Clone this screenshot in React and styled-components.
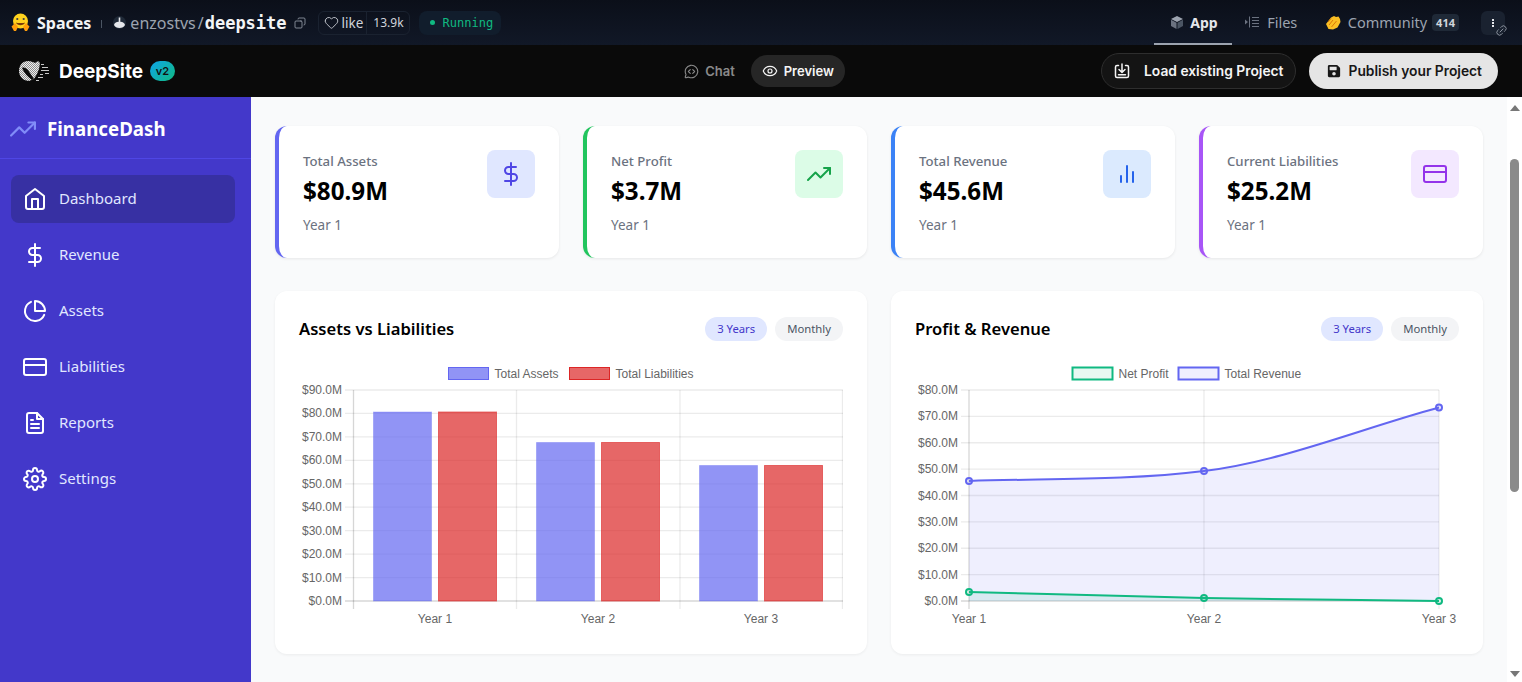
import { Copy, Eye, Heart, Link2, MessageCircleCode } from "lucide-react";
import { FaSave } from "react-icons/fa";
import {
  FiBarChart2,
  FiCreditCard,
  FiDollarSign,
  FiFileText,
  FiHome,
  FiPieChart,
  FiSettings,
  FiTrendingUp,
} from "react-icons/fi";
import styled, { createGlobalStyle } from "styled-components";

const GlobalStyle = createGlobalStyle`
  html, body { margin: 0; padding: 0; height: 100%; overflow: hidden; }
  body { font-family: "Noto Sans", sans-serif; background: #f9fafb; }
  * { box-sizing: border-box; }
`;

const stats = [
  { label: "Total Assets", value: "$80.9M", accent: "#6366f1", tint: "#e0e7ff", ink: "#4f46e5", Icon: FiDollarSign },
  { label: "Net Profit", value: "$3.7M", accent: "#22c55e", tint: "#dcfce7", ink: "#16a34a", Icon: FiTrendingUp },
  { label: "Total Revenue", value: "$45.6M", accent: "#3b82f6", tint: "#dbeafe", ink: "#2563eb", Icon: FiBarChart2 },
  { label: "Current Liabilities", value: "$25.2M", accent: "#a855f7", tint: "#f3e8ff", ink: "#9333ea", Icon: FiCreditCard },
];

const navItems = [
  { label: "Dashboard", Icon: FiHome, active: true },
  { label: "Revenue", Icon: FiDollarSign },
  { label: "Assets", Icon: FiPieChart },
  { label: "Liabilities", Icon: FiCreditCard },
  { label: "Reports", Icon: FiFileText },
  { label: "Settings", Icon: FiSettings },
];

// chart coordinates are relative to the canvas, like a chart.js canvas
const CHART_W = 544;
const CHART_H = 269;
const PLOT_TOP = 29;
const PLOT_BOTTOM = 240;
const GRID = "rgba(0,0,0,.08)";
const AXIS = "rgba(0,0,0,.16)";

const Legend = ({ items }) =>
  items.map((item) => (
    <g key={item.label}>
      <rect x={item.x} y={6.5} width={40} height={12} fill={item.fill} stroke={item.stroke} strokeWidth={item.line} />
      <text x={item.x + 46} y={16.5} fontSize="12" fill="#666">
        {item.label}
      </text>
    </g>
  ));

const YAxis = ({ max, left, right }) => {
  const rows = [];
  for (let v = 0; v <= max; v += 10) {
    const y = PLOT_BOTTOM - (v / max) * (PLOT_BOTTOM - PLOT_TOP);
    rows.push(
      <g key={v}>
        <line x1={left - 8} x2={right} y1={y} y2={y} stroke={v === 0 ? AXIS : GRID} strokeWidth="1.3" />
        <text x={left - 11} y={y + 4} fontSize="12" fill="#666" textAnchor="end">
          ${v}.0M
        </text>
      </g>
    );
  }
  return rows;
};

const barGroups = [
  { label: "Year 1", x: 74, top: 51 },
  { label: "Year 2", x: 237, top: 81.5 },
  { label: "Year 3", x: 400, top: 104.5 },
];

const BarChart = () => (
  <ChartCanvas viewBox={`0 0 ${CHART_W} ${CHART_H}`}>
    <Legend
      items={[
        { label: "Total Assets", x: 149.5, fill: "rgba(99,102,241,.7)", stroke: "#6366f1", line: 1 },
        { label: "Total Liabilities", x: 270.5, fill: "rgba(220,38,38,.7)", stroke: "#dc2626", line: 1 },
      ]}
    />
    <YAxis max={90} left={54} right={544} />
    {[54.5, 217.5, 381, 543.5].map((x) => (
      <line key={x} x1={x} x2={x} y1={PLOT_TOP} y2={PLOT_BOTTOM + 8} stroke={x === 54.5 ? AXIS : GRID} strokeWidth="1.3" />
    ))}
    {barGroups.map((g) => (
      <g key={g.label}>
        <rect x={g.x + 0.5} y={g.top} width={58} height={PLOT_BOTTOM - g.top} fill="rgba(99,102,241,.7)" stroke="rgba(99,102,241,.35)" />
        <rect x={g.x + 65.5} y={g.top} width={58} height={PLOT_BOTTOM - g.top} fill="rgba(220,38,38,.7)" stroke="rgba(220,38,38,.6)" />
        <text x={g.x + 62} y={262} fontSize="12" fill="#666" textAnchor="middle">
          {g.label}
        </text>
      </g>
    ))}
  </ChartCanvas>
);

// monotone cubic through three points, as chart.js does it
const curve = ([a, b, c]) => {
  const dx = (b[0] - a[0]) / 3;
  const d0 = (b[1] - a[1]) / (b[0] - a[0]);
  const d1 = (c[1] - b[1]) / (c[0] - b[0]);
  let m0 = d0;
  let m1 = (d0 + d1) / 2;
  if (d0 !== 0) {
    const s = Math.hypot(m0 / d0, m1 / d0);
    if (s > 3) {
      m0 *= 3 / s;
      m1 *= 3 / s;
    }
  }
  return (
    `M${a} C${a[0] + dx} ${a[1] + m0 * dx} ${b[0] - dx} ${b[1] - m1 * dx} ${b} ` +
    `C${b[0] + dx} ${b[1] + m1 * dx} ${c[0] - dx} ${c[1] - d1 * dx} ${c}`
  );
};

const revenue = [[54, 120], [289, 110], [524, 46.5]];
const profit = [[54, 231], [289, 237], [524, 240]];

const Series = ({ points, color, fill }) => (
  <g>
    <path d={`${curve(points)} L524 240 L54 240 Z`} fill={fill} />
    <path d={curve(points)} fill="none" stroke={color} strokeWidth="2" />
    {points.map(([x, y]) => (
      <circle key={x} cx={x} cy={y} r="3" fill={fill} stroke={color} strokeWidth="2" />
    ))}
  </g>
);

const LineChart = () => (
  <ChartCanvas viewBox={`0 0 ${CHART_W} ${CHART_H}`}>
    <Legend
      items={[
        { label: "Net Profit", x: 157.5, fill: "rgba(16,185,129,.1)", stroke: "#10b981", line: 2 },
        { label: "Total Revenue", x: 263.5, fill: "rgba(99,102,241,.1)", stroke: "#6366f1", line: 2 },
      ]}
    />
    <YAxis max={80} left={54} right={524} />
    {[54, 289, 524].map((x, i) => (
      <g key={x}>
        <line x1={x} x2={x} y1={PLOT_TOP} y2={PLOT_BOTTOM + 8} stroke={i === 0 ? AXIS : GRID} strokeWidth="1.3" />
        <text x={x} y={262} fontSize="12" fill="#666" textAnchor="middle">
          Year {i + 1}
        </text>
      </g>
    ))}
    <Series points={revenue} color="#6366f1" fill="rgba(99,102,241,.1)" />
    <Series points={profit} color="#10b981" fill="rgba(16,185,129,.1)" />
  </ChartCanvas>
);

const HugEmoji = () => (
  <svg width="19" height="19" viewBox="0 0 19 19">
    <circle cx="9.5" cy="8" r="7.5" fill="#ffd21e" />
    <path d="M5 9.5c1 3.5 8 3.500 9 0-1 .8-8 .8-9 0z" fill="#7a3b0a" />
    <circle cx="6.3" cy="6" r="1.1" fill="#3a3b45" />
    <circle cx="12.7" cy="6" r="1.1" fill="#3a3b45" />
    <path d="M.5 13.5 4 10l3 4-2 4H3zM18.500 13.500 15 10l-3 4 2 4h2z" fill="#ff9d0b" />
  </svg>
);

const OwnerAvatar = () => (
  <svg width="13" height="13" viewBox="0 0 13 13">
    <circle cx="6.5" cy="6.5" r="6.5" fill="#1f2937" />
    <path d="M5.700 1.500h1.600v4.200c2.600.2 4.500 1.300 4.700 3.300-.8 2-3 3-5.500 3S1.800 11 1 9c.2-2 2.100-3.100 4.700-3.300z" fill="#e5e7eb" />
  </svg>
);

const ClapEmoji = () => (
  <svg width="16" height="15" viewBox="0 0 16 15">
    <path d="M1 9 6 2.500 9 1l2 1 2.500-.5L15 4l.5 3-3 5.500L8 14.500 3.500 14z" fill="#fbbf24" />
    <path d="M4 10l4-5M6.500 12l5-6M3 7l3-3.500" stroke="#d97706" strokeWidth="1" fill="none" />
  </svg>
);

const Cube = () => (
  <svg width="12" height="13" viewBox="0 0 12 13">
    <path d="M6 0 12 3 6 6 0 3z" fill="#9ca3af" />
    <path d="M0 3.800 5.500 6.700V13L0 10z" fill="#6b7280" />
    <path d="M12 3.800 6.500 6.700V13L12 10z" fill="#4b5563" />
  </svg>
);

const FilesGlyph = () => (
  <svg width="15" height="12" viewBox="0 0 15 12" fill="#6b7280">
    <path d="M0 3.500 3 6 0 8.500z" />
    <rect x="4" y="0.500" width="1" height="11" />
    <rect x="7" y="1" width="7" height="1" />
    <rect x="7" y="4" width="7" height="1" />
    <rect x="7" y="7" width="7" height="1" />
    <rect x="7" y="10" width="7" height="1" />
  </svg>
);

const DeepLogo = () => (
  <svg width="33" height="24" viewBox="0 0 33 24">
    <defs>
      <pattern id="checker" width="2" height="2" patternUnits="userSpaceOnUse">
        <rect width="2" height="2" fill="#8f8f8f" />
        <rect width="1" height="1" fill="#eee" />
        <rect x="1" y="1" width="1" height="1" fill="#eee" />
      </pattern>
    </defs>
    <path d="M1 12C1 6 5 2 10 2c3 0 5 1 7 2l3-2 2 2-1 6-2 5-3 5-5 2C6 22 1 18 1 12z" fill="url(#checker)" />
    <path d="M4 9c2-1 4 0 6 2l6 9-2 1C10 18 6 14 4 9z" fill="#0a0a0a" />
    <path d="M23 5h3v1h-3zM24 8h6v1h-6zM23 11h8v1h-8zM27 14h4v1h-4zM22 15h3v1h-3zM20 18h5v1h-5zM18 21h3v1h-3z" fill="#c8c8c8" />
  </svg>
);

const TrayDownload = () => (
  <svg width="16" height="16" viewBox="0 0 16 16" fill="none" stroke="currentColor" strokeWidth="1.500" strokeLinecap="round" strokeLinejoin="round">
    <path d="M4.500 2.500H3A1.500 1.500 0 0 0 1.500 4v9A1.500 1.500 0 0 0 3 14.500h10a1.500 1.500 0 0 0 1.500-1.500V4A1.500 1.500 0 0 0 13 2.500h-1.500" />
    <path d="M8 1v8M5 6.500 8 9.500l3-3M4.500 11.700h7" />
  </svg>
);

const App = () => (
  <Page>
    <GlobalStyle />
    <HubBar>
      <HubLeft>
        <HugEmoji />
        <HubBrand>Spaces</HubBrand>
        <HubDivider />
        <OwnerAvatar />
        <Owner>enzostvs</Owner>
        <Slash>/</Slash>
        <RepoName>deepsite</RepoName>
        <CopyIcon size={12} strokeWidth={1.6} />
        <LikeGroup>
          <LikeButton>
            <Heart size={15} strokeWidth={1.4} /> like
          </LikeButton>
          <LikeCount>13.9k</LikeCount>
        </LikeGroup>
        <StatusPill>
          <StatusDot />
          Running
        </StatusPill>
      </HubLeft>
      <HubRight>
        <HubTab $active>
          <Cube />
          App
        </HubTab>
        <HubTab>
          <FilesGlyph />
          Files
        </HubTab>
        <HubTab>
          <ClapEmoji />
          Community
          <CountBadge>414</CountBadge>
        </HubTab>
        <MenuButton>
          <MenuDots />
          <MenuLink size={13} strokeWidth={1.5} />
        </MenuButton>
      </HubRight>
    </HubBar>
    <SiteBar>
      <SiteBrand>
        <DeepLogo />
        <SiteName>DeepSite</SiteName>
        <VersionBadge>v2</VersionBadge>
      </SiteBrand>
      <ViewSwitch>
        <ViewOption>
          <MessageCircleCode size={15} strokeWidth={1.8} />
          Chat
        </ViewOption>
        <ViewOption $active>
          <Eye size={16} strokeWidth={1.8} />
          Preview
        </ViewOption>
      </ViewSwitch>
      <SiteActions>
        <GhostButton>
          <TrayDownload />
          Load existing Project
        </GhostButton>
        <SolidButton>
          <FaSave size={14} />
          Publish your Project
        </SolidButton>
      </SiteActions>
    </SiteBar>
    <Body>
      <Sidebar>
        <SideHeader>
          <FiTrendingUp size={26} color="#818cf8" />
          <SideTitle>FinanceDash</SideTitle>
        </SideHeader>
        <SideNav>
          {navItems.map(({ label, Icon, active }) => (
            <NavItem key={label} $active={active}>
              <Icon size={24} />
              <NavLabel>{label}</NavLabel>
            </NavItem>
          ))}
        </SideNav>
      </Sidebar>
      <Main>
        <StatGrid>
          {stats.map(({ label, value, accent, tint, ink, Icon }) => (
            <StatCard key={label} $accent={accent}>
              <StatText>
                <StatLabel>{label}</StatLabel>
                <StatValue>{value}</StatValue>
                <StatNote>Year 1</StatNote>
              </StatText>
              <StatIcon $tint={tint} $ink={ink}>
                <Icon size={24} />
              </StatIcon>
            </StatCard>
          ))}
        </StatGrid>
        <ChartGrid>
          <ChartCard>
            <ChartHead>
              <ChartTitle>Assets vs Liabilities</ChartTitle>
              <PillRow>
                <RangePill $active>3 Years</RangePill>
                <RangePill>Monthly</RangePill>
              </PillRow>
            </ChartHead>
            <BarChart />
          </ChartCard>
          <ChartCard>
            <ChartHead>
              <ChartTitle>Profit &amp; Revenue</ChartTitle>
              <PillRow>
                <RangePill $active>3 Years</RangePill>
                <RangePill>Monthly</RangePill>
              </PillRow>
            </ChartHead>
            <LineChart />
          </ChartCard>
        </ChartGrid>
      </Main>
      <ScrollTrack>
        <ArrowUp />
        <ScrollThumb />
        <ArrowDown />
      </ScrollTrack>
    </Body>
  </Page>
);

export default App;

const Page = styled.div`
  width: 1522px;
  height: 682px;
  display: flex;
  flex-direction: column;
  overflow: hidden;
`;

const HubBar = styled.header`
  height: 45px;
  flex: none;
  display: flex;
  align-items: center;
  justify-content: space-between;
  padding: 0 17px 0 11px;
  background: linear-gradient(#0b0f19, #111827);
  color: #e5e7eb;
`;

const HubLeft = styled.div`
  display: flex;
  align-items: center;
`;

const HubBrand = styled.span`
  margin-left: 7px;
  font-size: 16px;
  font-weight: 700;
  color: #f3f4f6;
`;

const HubDivider = styled.span`
  width: 1px;
  height: 8px;
  margin: 2px 11px 0 10px;
  background: #4b5563;
`;

const Owner = styled.span`
  margin-left: 4px;
  font-size: 16px;
  color: #9ca3af;
`;

const Slash = styled.span`
  margin: 0 1px 0 2px;
  font-size: 16px;
  color: #9ca3af;
`;

const RepoName = styled.span`
  font-family: "DejaVu Sans Mono", monospace;
  font-size: 17px;
  font-weight: 700;
  color: #f3f4f6;
`;

const CopyIcon = styled(Copy)`
  margin-left: 7px;
  color: #9ca3af;
  transform: scaleX(-1);
`;

const LikeGroup = styled.div`
  display: flex;
  height: 24px;
  margin-left: 12px;
  align-items: stretch;
  border-radius: 6px;
  border: 1px solid #1a2230;
  color: #d1d5db;
`;

const LikeButton = styled.span`
  display: flex;
  align-items: center;
  gap: 3px;
  padding: 0 3px 0 5px;
  font-size: 13.500px;
  border-right: 1px solid #1a2230;
`;

const LikeCount = styled.span`
  display: flex;
  align-items: center;
  padding: 0 5px 0 6px;
  font-size: 12px;
`;

const StatusPill = styled.div`
  display: flex;
  align-items: center;
  gap: 8px;
  height: 24px;
  margin-left: 9px;
  padding: 0 8px 0 11px;
  border-radius: 8px;
  background: #111d2c;
  font-family: "DejaVu Sans Mono", monospace;
  font-size: 12px;
  color: #10b981;
`;

const StatusDot = styled.span`
  width: 5px;
  height: 5px;
  border-radius: 50%;
  background: #10b981;
`;

const HubRight = styled.nav`
  display: flex;
  align-items: center;
  height: 100%;
`;

const HubTab = styled.span`
  display: flex;
  align-items: center;
  gap: 7px;
  height: 100%;
  padding: ${(p) => (p.$active ? "1px 14px 0 17px" : "1px 14px 0 13.500px")};
  font-size: ${(p) => (p.$active ? "14px" : "14.500px")};
  font-weight: ${(p) => (p.$active ? 700 : 400)};
  color: ${(p) => (p.$active ? "#e5e7eb" : "#9ca3af")};
  border-bottom: 2px solid ${(p) => (p.$active ? "#9ca3af" : "transparent")};
`;

const CountBadge = styled.span`
  margin-left: -2px;
  padding: 1px 4px;
  border-radius: 4px;
  background: #1f2937;
  font-size: 11px;
  font-weight: 700;
  color: #d1d5db;
`;

const MenuButton = styled.span`
  position: relative;
  display: flex;
  align-items: center;
  justify-content: center;
  width: 24px;
  height: 24px;
  margin-left: 8px;
  border-radius: 6px;
  background: #1a2230;
`;

const MenuDots = styled.span`
  width: 2px;
  height: 2px;
  background: #e5e7eb;
  box-shadow: 0 -3px 0 #e5e7eb, 0 3px 0 #e5e7eb;
`;

const MenuLink = styled(Link2)`
  position: absolute;
  right: -3px;
  bottom: -2px;
  color: #9ca3af;
  transform: rotate(-45deg);
`;

const SiteBar = styled.div`
  height: 52px;
  flex: none;
  display: grid;
  grid-template-columns: 1fr auto 1fr;
  align-items: center;
  padding: 0 24px 0 18px;
  background: #0a0a0a;
`;

const SiteBrand = styled.div`
  display: flex;
  align-items: center;
`;

const SiteName = styled.span`
  margin-left: 8px;
  font-family: Inter, sans-serif;
  font-size: 19px;
  font-weight: 700;
  color: #fff;
`;

const VersionBadge = styled.span`
  display: flex;
  align-items: center;
  justify-content: center;
  width: 25px;
  height: 20px;
  margin-left: 7px;
  border-radius: 10px;
  background: linear-gradient(135deg, #0ea5e9, #10b981);
  font-family: Inter, sans-serif;
  font-size: 11px;
  font-weight: 600;
  color: #111;
`;

const ViewSwitch = styled.div`
  display: flex;
  align-items: center;
  gap: 5px;
  margin-left: 2px;
`;

const ViewOption = styled.span`
  display: flex;
  align-items: center;
  gap: 6px;
  height: 32px;
  padding: 0 11px;
  border-radius: 16px;
  font-family: Inter, sans-serif;
  font-size: 13px;
  font-weight: 600;
  color: ${(p) => (p.$active ? "#f5f5f5" : "#8a8a8a")};
  background: ${(p) => (p.$active ? "#262626" : "transparent")};
`;

const SiteActions = styled.div`
  display: flex;
  align-items: center;
  justify-content: flex-end;
  gap: 13px;
`;

const GhostButton = styled.span`
  display: flex;
  align-items: center;
  gap: 14px;
  height: 36px;
  padding: 0 11px 0 12px;
  border-radius: 18px;
  border: 1px solid #2e2e2e;
  background: #141414;
  font-family: Inter, sans-serif;
  font-size: 13.800px;
  font-weight: 600;
  color: #f5f5f5;
`;

const SolidButton = styled.span`
  display: flex;
  align-items: center;
  gap: 8px;
  height: 36px;
  padding: 0 16px 0 18px;
  border-radius: 18px;
  background: #e5e5e5;
  font-family: Inter, sans-serif;
  font-size: 13.800px;
  font-weight: 600;
  color: #171717;
`;

const Body = styled.div`
  flex: 1;
  min-height: 0;
  display: flex;
`;

const Sidebar = styled.aside`
  width: 251px;
  flex: none;
  background: #4338ca;
  color: #e0e7ff;
`;

const SideHeader = styled.div`
  display: flex;
  align-items: center;
  gap: 10px;
  height: 62px;
  padding: 2px 10px 0;
  border-bottom: 1px solid #4f46e5;
`;

const SideTitle = styled.span`
  margin-left: 1px;
  font-size: 18.700px;
  font-weight: 700;
  color: #fff;
`;

const SideNav = styled.nav`
  display: flex;
  flex-direction: column;
  gap: 8px;
  padding: 16px 16px 0 11px;
`;

const NavItem = styled.a`
  display: flex;
  align-items: center;
  gap: 12px;
  height: 48px;
  padding: 0 12px;
  border-radius: 8px;
  color: #fff;
  background: ${(p) => (p.$active ? "#3730a3" : "transparent")};
`;

const NavLabel = styled.span`
  margin-bottom: 2px;
  font-size: 15px;
  color: #e0e7ff;
`;

const Main = styled.main`
  flex: 1;
  min-width: 0;
  padding: 29px 24px 0;
  background: #f9fafb;
  overflow: hidden;
`;

const StatGrid = styled.div`
  display: grid;
  grid-template-columns: repeat(4, 1fr);
  gap: 24px;
`;

const StatCard = styled.div`
  display: flex;
  justify-content: space-between;
  align-items: flex-start;
  height: 132px;
  padding: 24px;
  border-radius: 12px;
  border-left: 4px solid ${(p) => p.$accent};
  background: #fff;
  box-shadow: 0 1px 3px rgba(0, 0, 0, 0.08);
`;

const StatText = styled.div`
  display: flex;
  flex-direction: column;
`;

const StatLabel = styled.span`
  margin-top: 1px;
  font-size: 13.200px;
  line-height: 20px;
  font-weight: 500;
  color: #6b7280;
`;

const StatValue = styled.span`
  margin-top: 4px;
  font-size: 24.200px;
  line-height: 32px;
  font-weight: 700;
  color: #000;
`;

const StatNote = styled.span`
  margin-top: 8px;
  font-size: 13.500px;
  line-height: 20px;
  color: #6b7280;
`;

const StatIcon = styled.span`
  display: flex;
  align-items: center;
  justify-content: center;
  width: 48px;
  height: 48px;
  border-radius: 8px;
  background: ${(p) => p.$tint};
  color: ${(p) => p.$ink};
`;

const ChartGrid = styled.div`
  display: grid;
  grid-template-columns: 1fr 1fr;
  gap: 24px;
  margin-top: 33px;
`;

const ChartCard = styled.section`
  height: 363px;
  padding: 24px;
  border-radius: 12px;
  background: #fff;
  box-shadow: 0 1px 3px rgba(0, 0, 0, 0.06);
`;

const ChartHead = styled.div`
  display: flex;
  align-items: center;
  justify-content: space-between;
  height: 28px;
  margin-bottom: 18px;
`;

const ChartTitle = styled.h3`
  margin: -2px 0 0;
  font-size: 16.600px;
  font-weight: 600;
  color: #000;
`;

const PillRow = styled.div`
  display: flex;
  gap: 8px;
`;

const RangePill = styled.span`
  height: 24px;
  padding: 0 12px;
  border-radius: 12px;
  font-size: 11.300px;
  line-height: 24px;
  color: ${(p) => (p.$active ? "#4338ca" : "#4b5563")};
  background: ${(p) => (p.$active ? "#e0e7ff" : "#f3f4f6")};
`;

const ChartCanvas = styled.svg`
  display: block;
  width: ${CHART_W}px;
  height: ${CHART_H}px;
  font-family: "Liberation Sans", Arial, sans-serif;
`;

const ScrollTrack = styled.div`
  width: 15px;
  flex: none;
  display: flex;
  flex-direction: column;
  align-items: center;
  padding: 8px 0 5px;
  background: #fff;
`;

const ArrowUp = styled.span`
  width: 0;
  height: 0;
  border: 5.500px solid transparent;
  border-top: 0;
  border-bottom: 6px solid #777;
`;

const ArrowDown = styled.span`
  width: 0;
  height: 0;
  margin-top: auto;
  border: 5.500px solid transparent;
  border-bottom: 0;
  border-top: 6px solid #777;
`;

const ScrollThumb = styled.span`
  width: 9px;
  height: 333px;
  margin-top: 48px;
  border-radius: 5px;
  background: #8a8a8a;
`;
